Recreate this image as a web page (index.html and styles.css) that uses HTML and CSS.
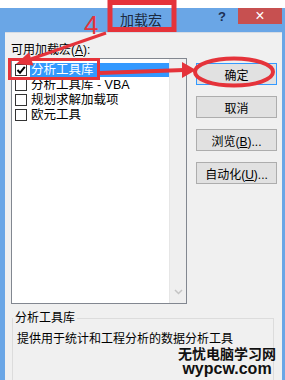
FILE: index.html
```html
<!DOCTYPE html>
<html lang="zh-CN">
<head>
    <meta charset="UTF-8">
    <meta name="viewport" content="width=device-width, initial-scale=1.0">
    <title>加载宏</title>
    <link rel="stylesheet" href="styles.css">
</head>
<body>
    <div class="window">
        <div class="title-bar">
            <span></span>
            <span class="title">加载宏</span>
            <div class="title-buttons">
                <span class="help">?</span>
                <span class="close">×</span>
            </div>
        </div>

        <div class="content">
            <div class="main">
                <div class="left-column">
                    <div class="list-label">可用加载宏(<u>A</u>):</div>
                    <div class="listbox">
                        <ul class="items">
                            <li class="item selected">
                                <span class="checkbox">
                                    <svg width="10" height="10" viewBox="0 0 10 10"><path d="M1.5 5 L4 7.8 L8.8 1.8" fill="none" stroke="#000" stroke-width="2"/></svg>
                                </span>
                                <span class="item-text">分析工具库</span>
                            </li>
                            <li class="item">
                                <span class="checkbox"></span>
                                <span class="item-text">分析工具库 - VBA</span>
                            </li>
                            <li class="item">
                                <span class="checkbox"></span>
                                <span class="item-text">规划求解加载项</span>
                            </li>
                            <li class="item">
                                <span class="checkbox"></span>
                                <span class="item-text">欧元工具</span>
                            </li>
                        </ul>
                        <div class="scrollbar">
                            <svg width="9" height="6" viewBox="0 0 9 6"><path d="M1 1 L4.5 4.5 L8 1" fill="none" stroke="#c4c4c4" stroke-width="1.5"/></svg>
                        </div>
                    </div>
                </div>

                <div class="buttons">
                    <button class="btn default">确定</button>
                    <button class="btn">取消</button>
                    <button class="btn">浏览(<u>B</u>)...</button>
                    <button class="btn">自动化(<u>U</u>)...</button>
                </div>
            </div>

            <fieldset class="description">
                <legend>分析工具库</legend>
                <p>提供用于统计和工程分析的数据分析工具</p>
            </fieldset>
        </div>
    </div>

    <!-- annotations drawn over the screenshot -->
    <svg class="marks" width="285" height="380" viewBox="0 0 285 380">
        <rect x="110" y="2.5" width="64" height="27" fill="none" stroke="#e5333a" stroke-width="5"/>
        <rect x="9.5" y="59.5" width="89" height="19" fill="none" stroke="#e5333a" stroke-width="3"/>
        <line x1="106" y1="33" x2="31" y2="59" stroke="#e5333a" stroke-width="3"/>
        <polygon points="16,64 33.4,65.5 29,52.3" fill="#e5333a"/>
        <line x1="100" y1="73" x2="184" y2="70" stroke="#e5333a" stroke-width="4"/>
        <polygon points="196,70 182,62 182,78" fill="#e5333a"/>
        <ellipse cx="234" cy="72" rx="39" ry="13.5" fill="none" stroke="#e5333a" stroke-width="4"/>
    </svg>
    <span class="step">4</span>

    <div class="watermark">
        <div class="wm-name">无忧电脑学习网</div>
        <div class="wm-url">wypcw.com</div>
    </div>
</body>
</html>
```

FILE: styles.css
```css
body {
    margin: 0;
    padding: 8px 0 0 0;
    width: 285px;
    height: 380px;
    overflow: hidden;
    position: relative;
    background-color: #ffffff;
    font-family: "Liberation Sans", "Noto Sans CJK SC", sans-serif;
    font-size: 12px;
    color: #000;
    box-sizing: border-box;
}

.window {
    background-color: #f0f0f0;
    border-left: 5px solid #6aa6e6;
    border-right: 3px solid #6aa6e6;
    height: 372px;
    overflow: hidden;
}

.title-bar {
    display: grid;
    grid-template-columns: 1fr auto 1fr;
    height: 24px;
    margin-left: -5px;
    margin-right: -3px;
    padding-right: 3px;
    background-color: #6aa6e6;
}

.title {
    font-size: 14px;
    line-height: 24px;
    color: #1c2a40;
}

.title-buttons {
    display: flex;
    justify-content: flex-end;
    align-items: flex-start;
}

.help {
    font-family: "Liberation Sans", sans-serif;
    font-weight: bold;
    font-size: 13px;
    line-height: 16px;
    color: #1d2f52;
    margin-right: 12px;
    padding-top: 1px;
}

.close {
    width: 44px;
    height: 16px;
    background-color: #c75050;
    color: white;
    font-family: "Liberation Sans", sans-serif;
    font-size: 16px;
    line-height: 15px;
    text-align: center;
}

.content {
    padding: 9px 5px 0 6px;
    border-top: 1px solid #d6dce4;
}

.main {
    display: flex;
    gap: 9px;
}

.left-column {
    width: 176px;
}

.list-label {
    line-height: 16px;
}

.listbox {
    display: flex;
    height: 246px;
    box-sizing: border-box;
    border: 1px solid #828790;
    background-color: white;
}

.items {
    flex: 1;
    list-style: none;
    margin: 0;
    padding: 3px 0 0 3px;
}

.item {
    display: flex;
    align-items: center;
    height: 15px;
    gap: 3px;
}

.checkbox {
    width: 12px;
    height: 12px;
    box-sizing: border-box;
    border: 1px solid #333;
    background-color: white;
    display: flex;
    align-items: center;
    justify-content: center;
}

.item-text {
    font-size: 12.5px;
    line-height: 14px;
    padding: 0 1px;
}

.selected .item-text {
    flex: 1;
    background-color: #3399ff;
    color: white;
}

.scrollbar {
    width: 17px;
    background-color: #efefef;
    border-left: 1px solid #e6e6e6;
    display: flex;
    align-items: flex-end;
    justify-content: center;
    padding-bottom: 8px;
    box-sizing: border-box;
}

.buttons {
    display: flex;
    flex-direction: column;
    gap: 11px;
    margin-top: 21px;
    width: 81px;
}

.btn {
    height: 22px;
    padding: 0;
    border: 1px solid #adadad;
    background-color: #e1e1e1;
    font-family: "Liberation Sans", "Noto Sans CJK SC", sans-serif;
    font-size: 12px;
    color: #000;
}

.btn.default {
    border-color: #3399ff;
}

.description {
    margin: 6px 3px 0 1px;
    padding: 0 4px 60px 4px;
    border: 1px solid #dcdcdc;
}

.description legend {
    margin-left: -4px;
    padding: 0 2px;
    line-height: 16px;
}

.description p {
    margin: 6px 0 0 0;
    line-height: 14px;
}

.marks {
    position: absolute;
    left: 0;
    top: 0;
}

.step {
    position: absolute;
    left: 84px;
    top: 12px;
    font-family: "Liberation Sans", sans-serif;
    font-size: 26px;
    line-height: 26px;
    color: #e5333a;
}

.watermark {
    position: absolute;
    left: 178px;
    top: 346px;
    font-weight: bold;
    color: #111;
    text-align: center;
}

.wm-name {
    font-family: "Noto Sans CJK SC", sans-serif;
    font-size: 14px;
    line-height: 15px;
}

.wm-url {
    font-family: "Liberation Sans", sans-serif;
    font-size: 16px;
    line-height: 15px;
}
```
